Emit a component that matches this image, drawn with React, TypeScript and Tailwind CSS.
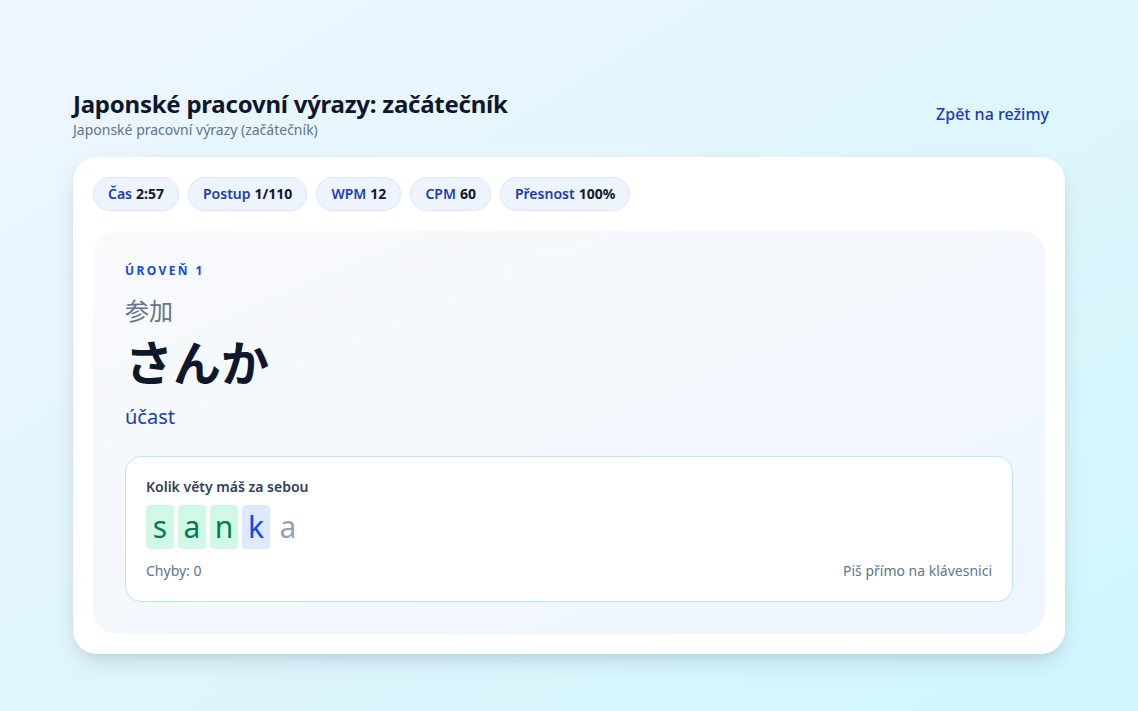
import React from 'react';

const stats = [
  { label: 'Čas', value: '2:57' },
  { label: 'Postup', value: '1/110' },
  { label: 'WPM', value: '12' },
  { label: 'CPM', value: '60' },
  { label: 'Přesnost', value: '100%' },
];

const typed = ['s', 'a', 'n'];
const current = 'k';
const rest = ['a'];

export default function App() {
  return (
    <div
      className="min-h-screen bg-gradient-to-br from-[#eff5fe] to-[#d0f6fd] text-slate-900"
      style={{ fontFamily: '"Noto Sans", "Noto Sans CJK JP", sans-serif' }}
    >
      <div className="max-w-5xl mx-auto px-4 pt-[88px] pb-14">
        <div className="flex items-center justify-between">
          <div>
            <h1 className="text-2xl font-bold leading-8 tracking-[-0.01em] text-slate-900">Japonské pracovní výrazy: začátečník</h1>
            <p className="text-sm text-slate-500 leading-5">Japonské pracovní výrazy (začátečník)</p>
          </div>
          <button className="px-4 py-2 text-base font-medium text-blue-800">Zpět na režimy</button>
        </div>

        <div className="mt-[17px] bg-white rounded-3xl shadow-[0_10px_25px_-5px_rgba(15,23,42,0.15),0_4px_10px_-4px_rgba(15,23,42,0.08)] p-5">
          <div className="flex flex-wrap gap-[9px]">
            {stats.map(s => (
              <div
                key={s.label}
                className="h-[34px] flex items-center px-[14px] rounded-full bg-[#eef4fd] border border-[#dce7f7] text-sm"
              >
                <span className="font-semibold text-blue-800">{s.label}</span>
                <span className="ml-1 font-bold text-slate-900">{s.value}</span>
              </div>
            ))}
          </div>

          <div className="mt-5 rounded-3xl bg-gradient-to-br from-slate-50 to-[#eef5fe] px-8 pt-8 pb-8">
            <p className="text-xs font-bold tracking-[0.2em] text-blue-700 leading-4">ÚROVEŇ 1</p>
            <p className="mt-4 text-2xl leading-8 text-slate-500">参加</p>
            <p className="mt-1 text-5xl leading-[64px] font-bold text-slate-900">さんか</p>
            <p className="mt-2 text-xl leading-7 text-blue-800">účast</p>

            <div className="mt-[25px] bg-white rounded-2xl border border-sky-200 px-5 pt-5 pb-5">
              <p className="text-sm font-semibold text-slate-700 leading-5">Kolik věty máš za sebou</p>
              <div className="mt-2 flex gap-1 text-3xl leading-none">
                {typed.map((c, i) => (
                  <span key={i} className="w-[28px] h-[44px] flex items-center justify-center rounded bg-emerald-100 text-emerald-700">
                    {c}
                  </span>
                ))}
                <span className="w-[28px] h-[44px] flex items-center justify-center rounded bg-blue-100 text-blue-700">{current}</span>
                {rest.map((c, i) => (
                  <span key={i} className="w-[28px] h-[44px] flex items-center justify-center text-slate-400">
                    {c}
                  </span>
                ))}
              </div>
              <div className="mt-3 flex justify-between text-sm text-slate-500 leading-5">
                <span>Chyby: 0</span>
                <span>Piš přímo na klávesnici</span>
              </div>
            </div>
          </div>
        </div>
      </div>
    </div>
  );
}
